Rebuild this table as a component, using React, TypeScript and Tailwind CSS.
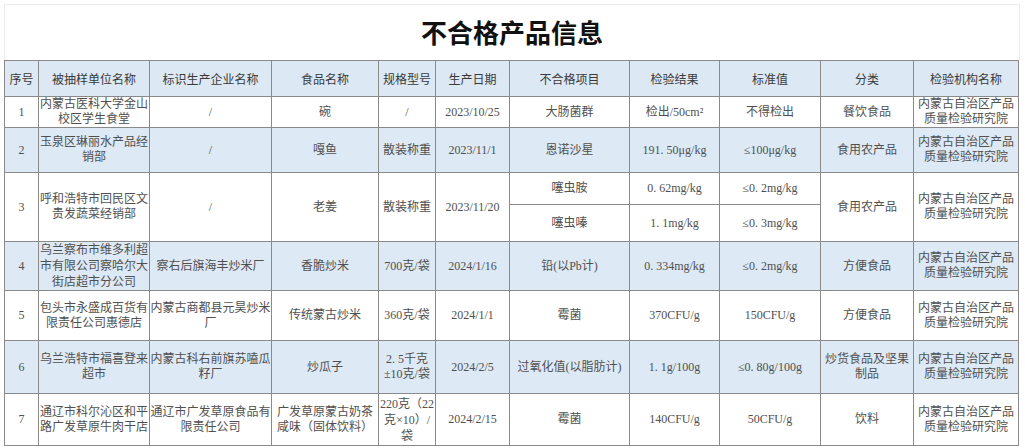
import React from "react";

const serif = "font-['Liberation_Serif','Noto_Sans_CJK_SC',serif]";

type Row = {
  no: string;
  unit: React.ReactNode;
  maker: React.ReactNode;
  food: React.ReactNode;
  spec: React.ReactNode;
  date: string;
  items: { item: string; result: string; std: string; h: string }[];
  cat: React.ReactNode;
  blue?: boolean;
};

const lab = (
  <>
    内蒙古自治区产品
    <br />
    质量检验研究院
  </>
);

const rows: Row[] = [
  {
    no: "1",
    unit: (
      <>
        内蒙古医科大学金山
        <br />
        校区学生食堂
      </>
    ),
    maker: "/",
    food: "碗",
    spec: "/",
    date: "2023/10/25",
    items: [{ item: "大肠菌群", result: "检出/50cm²", std: "不得检出", h: "h-[30px]" }],
    cat: "餐饮食品",
  },
  {
    no: "2",
    unit: (
      <>
        玉泉区琳丽水产品经
        <br />
        销部
      </>
    ),
    maker: "/",
    food: "嘎鱼",
    spec: "散装称重",
    date: "2023/11/1",
    items: [{ item: "恩诺沙星", result: "191. 50μg/kg", std: "≤100μg/kg", h: "h-[45px]" }],
    cat: "食用农产品",
    blue: true,
  },
  {
    no: "3",
    unit: (
      <>
        呼和浩特市回民区文
        <br />
        贵发蔬菜经销部
      </>
    ),
    maker: "/",
    food: "老姜",
    spec: "散装称重",
    date: "2023/11/20",
    items: [
      { item: "噻虫胺", result: "0. 62mg/kg", std: "≤0. 2mg/kg", h: "h-[32px]" },
      { item: "噻虫嗪", result: "1. 1mg/kg", std: "≤0. 3mg/kg", h: "h-[37px]" },
    ],
    cat: "食用农产品",
  },
  {
    no: "4",
    unit: (
      <span className="leading-[16px]">
        乌兰察布市维多利超
        <br />
        市有限公司察哈尔大
        <br />
        街店超市分公司
      </span>
    ),
    maker: "察右后旗海丰炒米厂",
    food: "香脆炒米",
    spec: "700克/袋",
    date: "2024/1/16",
    items: [{ item: "铅(以Pb计)", result: "0. 334mg/kg", std: "≤0. 2mg/kg", h: "h-[48px]" }],
    cat: "方便食品",
    blue: true,
  },
  {
    no: "5",
    unit: (
      <>
        包头市永盛成百货有
        <br />
        限责任公司惠德店
      </>
    ),
    maker: (
      <>
        内蒙古商都县元昊炒米
        <br />厂
      </>
    ),
    food: "传统蒙古炒米",
    spec: "360克/袋",
    date: "2024/1/1",
    items: [{ item: "霉菌", result: "370CFU/g", std: "150CFU/g", h: "h-[50px]" }],
    cat: "方便食品",
  },
  {
    no: "6",
    unit: (
      <>
        乌兰浩特市福喜登来
        <br />
        超市
      </>
    ),
    maker: (
      <>
        内蒙古科右前旗苏嗑瓜
        <br />
        籽厂
      </>
    ),
    food: "炒瓜子",
    spec: (
      <>
        2. 5千克
        <br />
        ±10克/袋
      </>
    ),
    date: "2024/2/5",
    items: [{ item: "过氧化值(以脂肪计)", result: "1. 1g/100g", std: "≤0. 80g/100g", h: "h-[53px]" }],
    cat: (
      <>
        炒货食品及坚果
        <br />
        制品
      </>
    ),
    blue: true,
  },
  {
    no: "7",
    unit: (
      <>
        通辽市科尔沁区和平
        <br />
        路广发草原牛肉干店
      </>
    ),
    maker: (
      <>
        通辽市广发草原食品有
        <br />
        限责任公司
      </>
    ),
    food: (
      <>
        广发草原蒙古奶茶
        <br />
        咸味（固体饮料）
      </>
    ),
    spec: (
      <span className="leading-[16px]">
        220克（22
        <br />
        克×10）/
        <br />袋
      </span>
    ),
    date: "2024/2/15",
    items: [{ item: "霉菌", result: "140CFU/g", std: "50CFU/g", h: "h-[52px]" }],
    cat: "饮料",
  },
];

const heads = [
  "序号",
  "被抽样单位名称",
  "标识生产企业名称",
  "食品名称",
  "规格型号",
  "生产日期",
  "不合格项目",
  "检验结果",
  "标准值",
  "分类",
  "检验机构名称",
];

const widths = [34, 111, 122, 107, 57, 74, 120, 90, 101, 93, 105];

const td = "border border-[#8a8a8a] p-0 text-center align-middle";

export default function App() {
  return (
    <div className="h-[448px] w-[1025px] overflow-hidden bg-white pl-[4px] pt-[4px]">
      <div className="flex h-[56px] w-[1016px] items-center justify-center border border-b-0 border-[#ececec] pb-[3px]">
        <span className="font-['Noto_Sans_CJK_SC',sans-serif] text-[26px] font-bold text-[#111]">
          不合格产品信息
        </span>
      </div>
      <table className="w-[1014px] table-fixed border-collapse text-[12px] leading-[15px]">
        <colgroup>
          {widths.map((w, i) => (
            <col key={i} style={{ width: w }} />
          ))}
        </colgroup>
        <thead>
          <tr className="h-[36px] bg-[#dce8f4]">
            {heads.map((h) => (
              <th
                key={h}
                className={`${td} font-['Noto_Sans_CJK_SC',sans-serif] font-normal text-[#3a3a3a]`}
              >
                {h}
              </th>
            ))}
          </tr>
        </thead>
        <tbody className={`${serif} text-[#505050]`}>
          {rows.map((r) =>
            r.items.map((it, k) => (
              <tr key={r.no + k} className={`${it.h} ${r.blue ? "bg-[#dde9f5]" : "bg-white"}`}>
                {k === 0 && (
                  <>
                    <td rowSpan={r.items.length} className={td}>{r.no}</td>
                    <td rowSpan={r.items.length} className={td}>{r.unit}</td>
                    <td rowSpan={r.items.length} className={td}>{r.maker}</td>
                    <td rowSpan={r.items.length} className={td}>{r.food}</td>
                    <td rowSpan={r.items.length} className={td}>{r.spec}</td>
                    <td rowSpan={r.items.length} className={td}>{r.date}</td>
                  </>
                )}
                <td className={td}>{it.item}</td>
                <td className={td}>{it.result}</td>
                <td className={td}>{it.std}</td>
                {k === 0 && (
                  <>
                    <td rowSpan={r.items.length} className={td}>{r.cat}</td>
                    <td rowSpan={r.items.length} className={td}>{lab}</td>
                  </>
                )}
              </tr>
            ))
          )}
        </tbody>
      </table>
    </div>
  );
}
